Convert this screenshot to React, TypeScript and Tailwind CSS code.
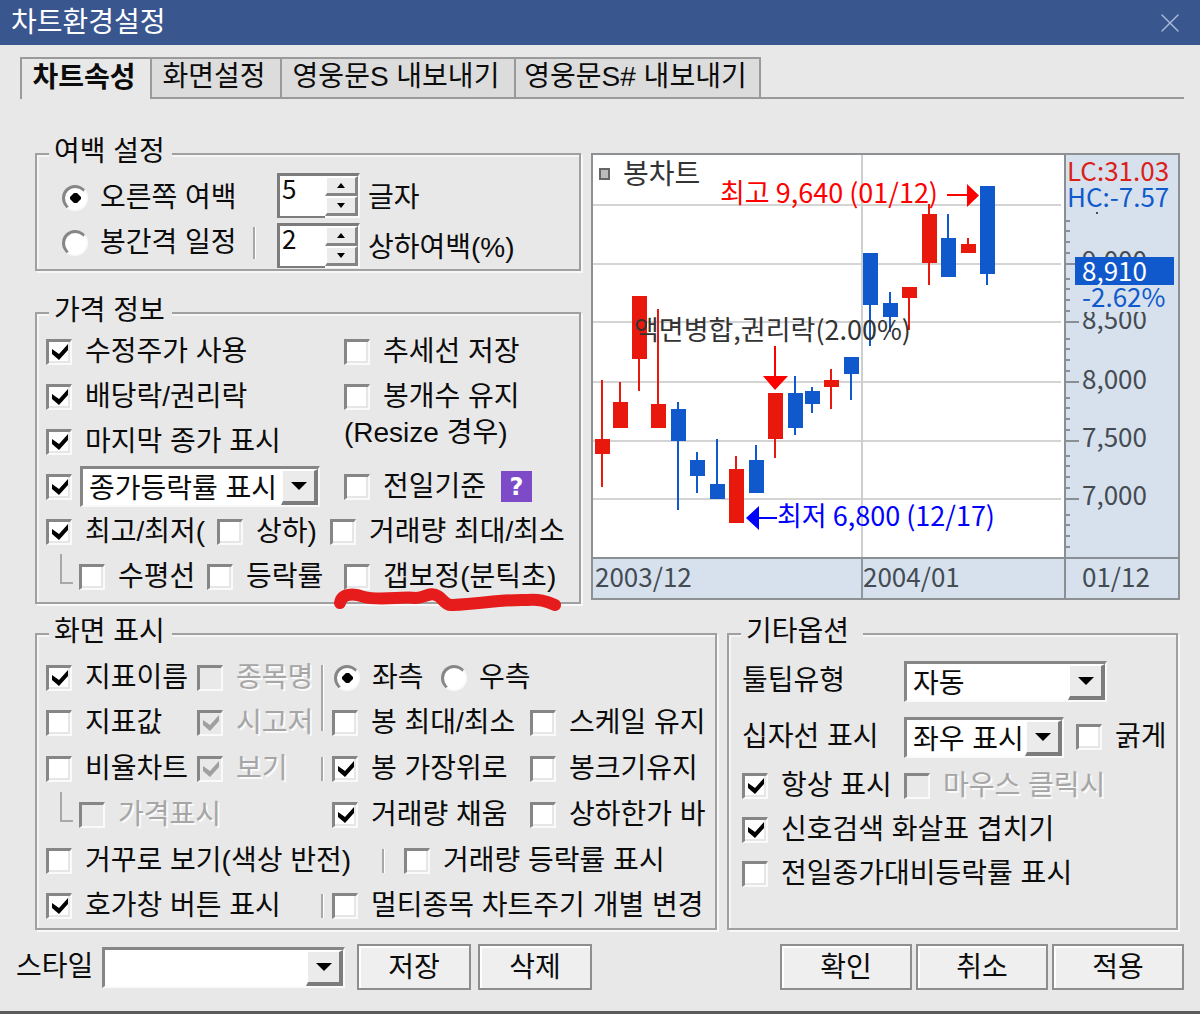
import { ReactNode } from 'react'
import { X } from 'lucide-react'
import clsx from 'clsx'

const tabs = [
  { label: '차트속성', width: 'w-[130px]' },
  { label: '화면설정', width: 'w-[130px]' },
  { label: '영웅문S 내보내기', width: 'w-[234px]' },
  { label: '영웅문S# 내보내기', width: 'w-[247px]' },
]

const RED = '#e8190c'
const BLUE = '#1059cc'

// [x, high, bodyTop, bodyBottom, low, color]
const candles: [number, number, number, number, number, string][] = [
  [11, 227, 286, 301, 334, RED],
  [29, 229, 249, 275, 275, RED],
  [48, 143, 143, 206, 238, RED],
  [67, 156, 251, 275, 275, RED],
  [87, 249, 256, 288, 357, BLUE],
  [106, 299, 307, 323, 340, BLUE],
  [126, 286, 331, 346, 346, BLUE],
  [145, 303, 316, 370, 370, RED],
  [165, 292, 307, 340, 340, BLUE],
  [184, 240, 240, 286, 305, RED],
  [204, 223, 240, 275, 282, BLUE],
  [221, 234, 238, 251, 260, BLUE],
  [240, 216, 227, 234, 256, RED],
  [260, 204, 204, 221, 247, BLUE],
  [279, 100, 100, 152, 193, BLUE],
  [299, 139, 150, 164, 179, BLUE],
  [318, 134, 134, 145, 177, RED],
  [338, 51, 61, 110, 132, RED],
  [357, 61, 85, 124, 124, BLUE],
  [377, 85, 91, 100, 100, RED],
  [396, 33, 33, 121, 132, BLUE],
]

const gridLines = [51, 110, 168, 228, 287, 345]
const priceLabels = [
  { y: 117, text: '9,000' },
  { y: 176, text: '8,500' },
  { y: 236, text: '8,000' },
  { y: 294, text: '7,500' },
  { y: 352, text: '7,000' },
]

function Chart() {
  return (
    <svg viewBox="0 0 589 447" className="block w-full font-['Noto_Sans_CJK_KR',sans-serif] text-[26px]" role="img" aria-label="봉차트">
      <rect x="0" y="0" width="589" height="447" fill="#fff" />
      <rect x="474" y="0" width="115" height="447" fill="#d6e1ed" />
      <rect x="0" y="405" width="589" height="42" fill="#d6e1ed" />

      {/* 눈금선 */}
      {gridLines.map(y => <rect key={y} x="2" y={y} width="468" height="2" fill="#d4d4d4" />)}
      <rect x="270" y="0" width="2" height="405" fill="#cfcfcf" />
      <rect x="270" y="405" width="2" height="42" fill="#8e979f" />

      {/* 봉 */}
      {candles.map(([x, high, top, bottom, low, color]) => (
        <g key={x} fill={color}>
          <rect x={x - 1} y={high} width="2" height={low - high} />
          <rect x={x - 7} y={top} width="15" height={bottom - top} />
        </g>
      ))}

      {/* 가격축 */}
      <g fill="#444b52">
        {priceLabels.map(p => <text key={p.text} x="491" y={p.y}>{p.text}</text>)}
        <rect x="505" y="59" width="2" height="2" />
      </g>
      {[110, 168, 228, 287, 345, 404].map(y => (
        <g key={y} fill="#8a8f94">
          <rect x="474" y={y} width="14" height="2" />
          {[11, 22, 33, 43].map(d => <rect key={d} x="474" y={y - d} width="5" height="2" />)}
        </g>
      ))}
      <rect x="484" y="132" width="99" height="27" fill="#d6e1ed" />
      <rect x="484" y="104" width="99" height="28" fill={BLUE} />
      <text x="491" y="128" fill="#fff">8,910</text>
      <text x="491" y="154" fill={BLUE}>-2.62%</text>
      <text x="476" y="28" fill="#dc2018">LC:31.03</text>
      <text x="476" y="54" fill={BLUE}>HC:-7.57</text>

      {/* 날짜축 */}
      <g fill="#444b52">
        <text x="4" y="434">2003/12</text>
        <text x="272" y="434">2004/01</text>
        <text x="491" y="434">01/12</text>
      </g>

      <rect x="9" y="16" width="9" height="10" fill="#bbb" stroke="#666" strokeWidth="2" />
      <text x="32" y="31" fontSize="28" fill="#333">봉차트</text>
      <text x="43" y="187" fontSize="27" fill="#333">액면병합,권리락(2.00%)</text>

      <g fill="#f00">
        <text x="129" y="50" fontSize="27">최고 9,640 (01/12)</text>
        <path d="M356 41h20V31l12 11.5L376 54V43h-20z" />
        <path d="M183 193h2v30h12l-13 14-12-14h11z" />
      </g>
      <g fill="#00f">
        <text x="186" y="373" fontSize="27">최저 6,800 (12/17)</text>
        <path d="M186 364h-18v-11l-13 12 13 12v-11h18z" />
      </g>

      <rect x="473" y="0" width="2" height="447" fill="#8a8f94" />
      <rect x="0" y="404" width="589" height="2" fill="#8a8f94" />
      <rect x="1" y="1" width="587" height="445" fill="none" stroke="#8e9194" strokeWidth="2" />
    </svg>
  )
}

interface OptionProps {
  label: string
  checked?: boolean
  disabled?: boolean
  className?: string
}

const disabledText = 'text-[#a6a6a6] [text-shadow:2px_2px_0_#fafafa]'
const sunken = 'border-t-[3px] border-l-[3px] border-r-2 border-b-2 border-t-[#868686] border-l-[#868686] border-r-[#fafafa] border-b-[#fafafa]'

function CheckBox({ checked, disabled, name }: { checked?: boolean; disabled?: boolean; name?: string }) {
  return (
    <span className="grid shrink-0">
      <input
        type="checkbox"
        aria-label={name}
        defaultChecked={checked}
        disabled={disabled}
        className={clsx('peer col-start-1 row-start-1 size-[26px] appearance-none', sunken, disabled ? 'bg-[#e9e9e9]' : 'bg-white shadow-[inset_-2px_-2px_0_#e6e6e6]')}
      />
      <svg viewBox="0 0 26 26" className="pointer-events-none invisible col-start-1 row-start-1 size-[26px] peer-checked:visible">
        <path d="M6 10l7 5 9-10v6l-9 10-7-6z" fill={disabled ? '#a0a0a0' : '#000'} />
      </svg>
    </span>
  )
}

function Check({ label, checked, disabled, className }: OptionProps) {
  return (
    <label className={clsx('flex shrink-0 items-center gap-[13px]', disabled && disabledText, className)}>
      <CheckBox checked={checked} disabled={disabled} />
      {label}
    </label>
  )
}

function Radio({ label, checked, name, className }: OptionProps & { name: string }) {
  return (
    <label className={clsx('flex shrink-0 items-center gap-3', className)}>
      <span className="grid shrink-0">
        <input type="radio" name={name} defaultChecked={checked} className={clsx('peer col-start-1 row-start-1 size-[26px] appearance-none rounded-full bg-white', sunken)} />
        <svg viewBox="0 0 26 26" className="pointer-events-none invisible col-start-1 row-start-1 size-[26px] peer-checked:visible">
          <path d="M12 8h3l4 4v2l-4 4h-3l-4-4v-2z" />
        </svg>
      </span>
      {label}
    </label>
  )
}

function Select({ id, name, options, className }: { id?: string; name?: string; options: string[]; className: string }) {
  return (
    <div className={clsx('relative h-[41px] shrink-0', className)}>
      <select id={id} aria-label={name} className={clsx('size-full appearance-none bg-white pt-1 pl-[6px]', sunken)}>
        {options.map(o => <option key={o}>{o}</option>)}
      </select>
      <span className="pointer-events-none absolute top-[3px] right-[2px] bottom-[2px] flex w-[37px] items-center justify-center border-t-2 border-r-4 border-b-4 border-l-2 border-t-white border-r-[#7c7c7c] border-b-[#7c7c7c] border-l-white bg-[#ebebeb]">
        <svg viewBox="0 0 16 8" className="h-2 w-4"><path d="M0 0h16L8 8z" /></svg>
      </span>
    </div>
  )
}

function Spinner({ id, value }: { id: string; value: number }) {
  const button = 'flex flex-1 items-center justify-center border-t-2 border-r-3 border-b-3 border-l-2 border-t-white border-r-[#858585] border-b-[#858585] border-l-white bg-[#ebebeb]'
  return (
    <div className="flex h-[45px] w-[83px] shrink-0">
      <input
        id={id}
        type="text"
        defaultValue={value}
        className="w-12 border-3 border-r-0 border-b-2 border-[#7c7c7c] bg-white pb-4 pl-[2px] font-['Noto_Sans_CJK_KR',sans-serif] text-[26px]"
      />
      <div className="flex flex-1 flex-col border-t-3 border-r-2 border-b-2 border-t-[#7c7c7c] border-r-[#fafafa] border-b-[#fafafa]">
        <button type="button" aria-label="증가" className={button}>
          <svg viewBox="0 0 8 5" className="h-[5px] w-2"><path d="M4 0l4 5H0z" /></svg>
        </button>
        <button type="button" aria-label="감소" className={button}>
          <svg viewBox="0 0 8 5" className="h-[5px] w-2"><path d="M0 0h8L4 5z" /></svg>
        </button>
      </div>
    </div>
  )
}

function Group({ title, wide, children }: { title: string; wide?: boolean; children: ReactNode }) {
  return (
    <fieldset className="min-w-0 border-2 border-[#a0a0a0] pl-[9px] shadow-[2px_2px_0_#f8f8f8,inset_2px_2px_0_#f5f5f5]">
      <legend className={clsx('ml-[3px] bg-[#e8e8e8] pb-1 pl-[5px] leading-7', wide ? 'pr-[14px]' : 'pr-[7px]')}>{title}</legend>
      {children}
    </fieldset>
  )
}

function Row({ children, className = 'h-[45px]' }: { children: ReactNode; className?: string }) {
  return <div className={clsx('flex items-center', className)}>{children}</div>
}

function Divider({ className }: { className: string }) {
  return <span className={clsx('w-[3px] shrink-0 border-r border-l-2 border-r-white border-l-[#a8a8a8]', className)} />
}

function Branch() {
  return <span className="mr-[6px] ml-[14px] h-[30px] w-[13px] shrink-0 self-start border-b-2 border-l-2 border-[#a8a8a8]" />
}

function Button({ children, className }: { children: ReactNode; className: string }) {
  return (
    <button type="button" className={clsx('h-[46px] border-2 border-[#8e8e8e] bg-[#efefef] pt-[2px] shadow-[inset_2px_2px_0_#fff]', className)}>
      {children}
    </button>
  )
}

export default function App() {
  return (
    <div className="min-w-[1200px] border-b-3 border-[#5c5c5c] bg-[#e8e8e8] pb-[21px] font-['Liberation_Sans','Noto_Sans_CJK_KR',sans-serif] text-[28px] leading-7 whitespace-nowrap text-[#0c0c0c]">
      <header className="flex h-[45px] items-center justify-between bg-[#39568f] pr-[14px] pl-[11px] text-white">
        <h1>차트환경설정</h1>
        <button type="button" aria-label="닫기">
          <X size={32} strokeWidth={1} className="text-[#a9b9d8]" />
        </button>
      </header>

      <nav role="tablist" className="mt-3 mr-4 ml-5 flex h-[42px]">
        {tabs.map((tab, i) => (
          <button
            key={tab.label}
            type="button"
            role="tab"
            aria-selected={i === 0}
            className={clsx(
              'border-t-2 border-[#9a9a9a] pr-1 pb-[2px]',
              tab.width,
              i === 0 ? 'border-l-2 font-bold' : 'border-b-2 border-l-2 bg-[#dcdcdc]',
              i === tabs.length - 1 && 'border-r-2',
            )}
          >
            {tab.label}
          </button>
        ))}
        <span className="flex-1 border-b-2 border-[#9a9a9a]" />
      </nav>

      <main className="pt-[39px] pr-5 pl-[35px]">
        <div className="grid grid-cols-[546fr_589fr] gap-[10px]">
          <div>
            <Group title="여백 설정">
              <div className="flex pb-px">
                <div className="w-[231px] pt-[5px] pl-4">
                  <Row><Radio name="margin" label="오른쪽 여백" checked /></Row>
                  <Row>
                    <Radio name="margin" label="봉간격 일정" className="w-[191px]" />
                    <Divider className="h-8" />
                  </Row>
                </div>
                <div className="flex flex-col gap-[5px] pt-[3px]">
                  <div className="flex items-center gap-2">
                    <Spinner id="chars" value={5} />
                    <label htmlFor="chars" className="pt-1">글자</label>
                  </div>
                  <div className="flex items-center gap-2">
                    <Spinner id="margin-pct" value={2} />
                    <label htmlFor="margin-pct" className="pt-1">상하여백(%)</label>
                  </div>
                </div>
              </div>
            </Group>

            <div className="h-[26px]" />

            <Group title="가격 정보">
              <Row>
                <Check label="수정주가 사용" checked className="w-[298px]" />
                <Check label="추세선 저장" />
              </Row>
              <Row>
                <Check label="배당락/권리락" checked className="w-[298px]" />
                <Check label="봉개수 유지" />
              </Row>
              <Row>
                <Check label="마지막 종가 표시" checked className="w-[298px]" />
                <span className="self-start">(Resize 경우)</span>
              </Row>
              <Row>
                <div className="flex w-[298px] shrink-0 items-center gap-2">
                  <CheckBox checked name="종가등락률 표시" />
                  <Select name="종가등락률" options={['종가등락률 표시']} className="w-[240px]" />
                </div>
                <Check label="전일기준" />
                <button type="button" aria-label="도움말" className="ml-[15px] size-[31px] bg-[#7d4bc8] font-['DejaVu_Sans'] text-2xl font-bold text-white">?</button>
              </Row>
              <Row>
                <Check label="최고/최저(" checked className="w-[171px]" />
                <Check label="상하)" className="w-[113px]" />
                <Check label="거래량 최대/최소" />
              </Row>
              <Row className="mb-[3px] h-[45px]">
                <Branch />
                <Check label="수평선" className="w-[128px]" />
                <Check label="등락률" className="w-[137px]" />
                <div className="relative">
                  <Check label="갭보정(분틱초)" />
                  {/* 빨간 펜 밑줄 */}
                  <svg viewBox="0 0 230 24" className="pointer-events-none absolute top-6 -left-[11px] h-6 w-[230px]">
                    <path d="M7 16C9 5 23 7 31 10c16 4 40-1 52 1 9 0 14-7 22-2 5 3 8 10 15 9 28-1 50-6 74-5 12-1 19 1 28 5" fill="none" stroke="#e61b1b" strokeWidth="12" strokeLinecap="round" strokeLinejoin="round" />
                  </svg>
                </div>
              </Row>
            </Group>
          </div>

          <div className="pt-[15px]">
            <Chart />
          </div>
        </div>

        <div className="mt-[14px] grid grid-cols-[682fr_451fr] gap-[10px] pr-[2px]">
          <Group title="화면 표시">
            <div className="pt-[5px]">
              <Row>
                <Check label="지표이름" checked className="w-[151px]" />
                <Check label="종목명" disabled className="w-[124px]" />
                <Divider className="mr-[10px] h-[35px] self-end" />
                <Radio name="side" label="좌측" checked className="w-[107px]" />
                <Radio name="side" label="우측" />
              </Row>
              <Row className="h-[46px]">
                <Check label="지표값" className="w-[151px]" />
                <Check label="시고저" checked disabled className="w-[124px]" />
                <Divider className="mr-2 h-[31px] self-start" />
                <Check label="봉 최대/최소" className="w-[198px]" />
                <Check label="스케일 유지" />
              </Row>
              <Row className="h-[46px]">
                <Check label="비율차트" className="w-[151px]" />
                <Check label="보기" checked disabled className="w-[124px]" />
                <Divider className="mr-2 h-6" />
                <Check label="봉 가장위로" checked className="w-[198px]" />
                <Check label="봉크기유지" />
              </Row>
              <Row className="h-[46px]">
                <Branch />
                <Check label="가격표시" disabled className="w-[253px]" />
                <Check label="거래량 채움" checked className="w-[198px]" />
                <Check label="상하한가 바" />
              </Row>
              <Row>
                <Check label="거꾸로 보기(색상 반전)" className="w-[336px]" />
                <Divider className="mr-[19px] h-6" />
                <Check label="거래량 등락률 표시" />
              </Row>
              <Row>
                <Check label="호가창 버튼 표시" checked className="w-[275px]" />
                <Divider className="mr-2 h-6" />
                <Check label="멀티종목 차트주기 개별 변경" />
              </Row>
            </div>
          </Group>

          <Group title="기타옵션" wide>
            <div className="pt-[2px] pl-1">
              <Row className="h-[58px]">
                <label htmlFor="tooltip-type" className="w-[162px]">툴팁유형</label>
                <Select id="tooltip-type" options={['자동']} className="w-[203px]" />
              </Row>
              <Row className="h-[54px]">
                <label htmlFor="crosshair" className="w-[162px]">십자선 표시</label>
                <Select id="crosshair" options={['좌우 표시']} className="mr-3 w-[160px]" />
                <Check label="굵게" />
              </Row>
              <Row className="h-11">
                <Check label="항상 표시" checked className="w-[162px]" />
                <Check label="마우스 클릭시" disabled />
              </Row>
              <Row className="h-11"><Check label="신호검색 화살표 겹치기" checked /></Row>
              <Row className="h-11"><Check label="전일종가대비등락률 표시" /></Row>
            </div>
          </Group>
        </div>
      </main>

      <footer className="mt-[14px] flex items-center pr-4 pl-4">
        <label htmlFor="style" className="w-[86px]">스타일</label>
        <Select id="style" options={['']} className="mr-3 w-[243px]" />
        <div className="flex gap-[7px]">
          <Button className="w-[114px]">저장</Button>
          <Button className="w-[114px]">삭제</Button>
        </div>
        <div className="ml-auto flex gap-1">
          <Button className="w-[132px]">확인</Button>
          <Button className="w-[132px]">취소</Button>
          <Button className="w-[132px]">적용</Button>
        </div>
      </footer>
    </div>
  )
}
